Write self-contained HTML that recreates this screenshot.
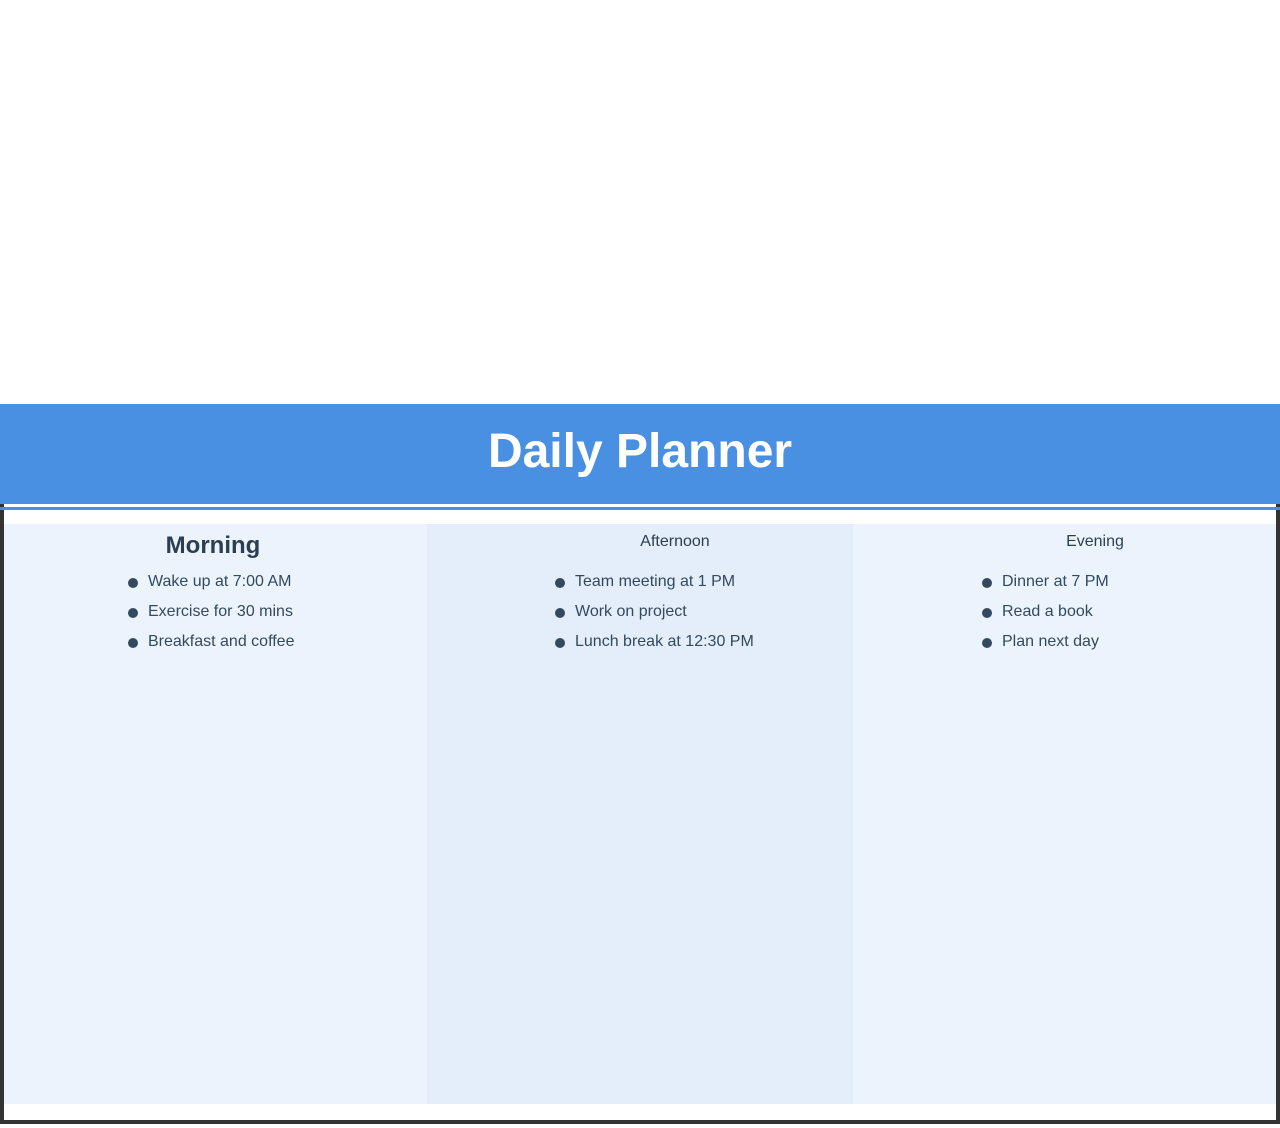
<!DOCTYPE html>
<html><head><style>
body{margin:0;width:1280px;height:1128px;background:#fff;position:relative;font-family:"Liberation Sans",sans-serif;overflow:hidden}
.hdr{position:absolute;top:404px;left:0;width:1280px;height:100px;background:#4a90e2;color:#fff;font-weight:bold;font-size:48px;text-align:center;line-height:95px}
.frame{position:absolute;top:504px;left:0;width:1272px;height:616px;border:4px solid #333;border-top:none}
.bl{position:absolute;top:507px;left:0;width:1280px;height:3px;background:#4a90e2}
.col{position:absolute;top:524px;height:580px}
.h{position:absolute;top:0;color:#2c3e50;white-space:nowrap;transform:translateX(-50%)}
ul{position:absolute;top:48px;margin:0;padding:0;list-style:none}
li{position:relative;padding-left:20px;font-size:16px;color:#34495e;height:30px;line-height:20px;white-space:nowrap}
li:before{content:"";position:absolute;left:0;top:6px;width:10px;height:10px;border-radius:50%;background:#34495e}
</style></head><body>
<div class="hdr">Daily Planner</div>
<div class="frame"></div>
<div class="bl"></div>
<div class="col" style="left:4px;width:423px;background:#ebf4fc">
<div class="h" style="left:209px;font-size:24px;font-weight:bold;top:8px">Morning</div>
<ul style="left:124px"><li>Wake up at 7:00 AM</li><li>Exercise for 30 mins</li><li>Breakfast and coffee</li></ul></div>
<div class="col" style="left:427px;width:426px;background:#e3eefa">
<div class="h" style="left:248px;font-size:16px;top:9px">Afternoon</div>
<ul style="left:128px"><li>Team meeting at 1 PM</li><li>Work on project</li><li>Lunch break at 12:30 PM</li></ul></div>
<div class="col" style="left:853px;width:423px;background:#ebf4fc">
<div class="h" style="left:242px;font-size:16px;top:9px">Evening</div>
<ul style="left:129px"><li>Dinner at 7 PM</li><li>Read a book</li><li>Plan next day</li></ul></div>
</body></html>
